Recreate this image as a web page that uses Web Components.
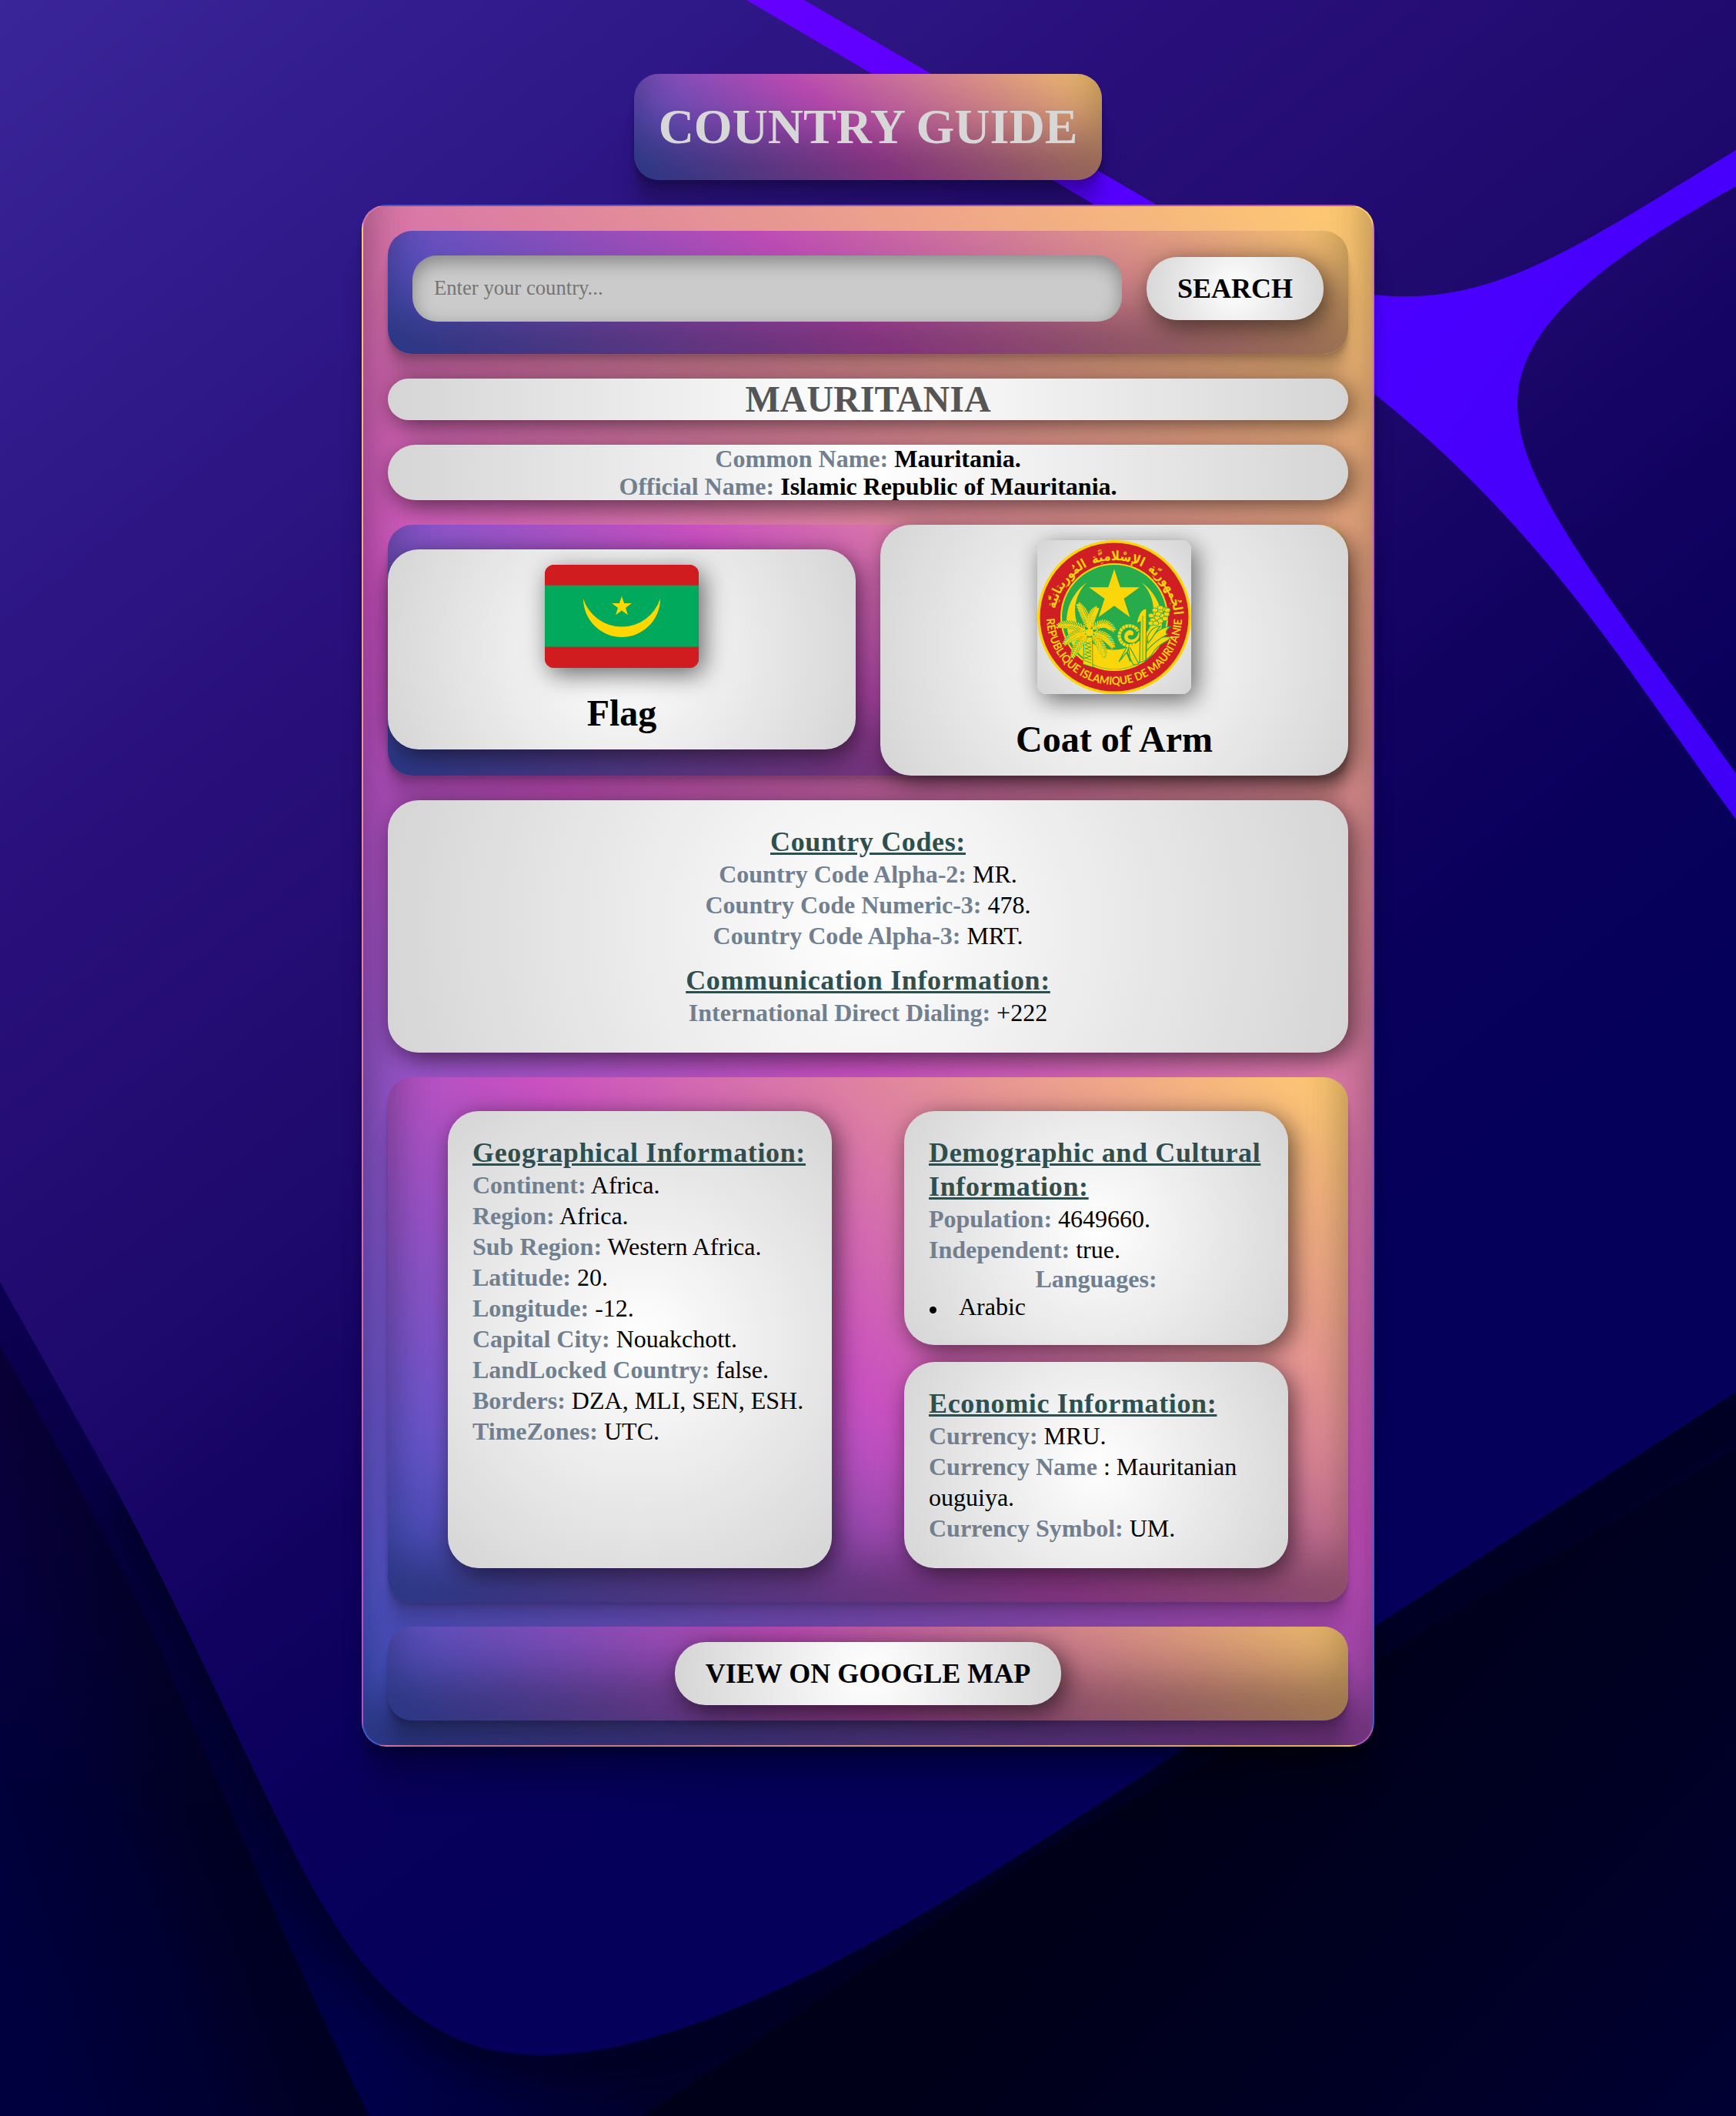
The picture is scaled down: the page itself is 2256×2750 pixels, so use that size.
<!DOCTYPE html>
<html lang="en">
<head>
<meta charset="utf-8">
<title>Country Guide</title>
<style>
  html, body { margin: 0; padding: 0; }
  body {
    font-family: "Liberation Serif", "Times New Roman", serif;
    font-size: 32px;
    color: #000;
    background: #00001c;
    --warm: linear-gradient(43deg, #4158d0 0%, #c850c0 46%, #ffcc70 100%);
    --clay: rgba(0,0,0,.17) 0 -46px 50px 0 inset, rgba(0,0,0,.15) 0 -72px 60px 0 inset,
            rgba(0,0,0,.1) 0 -158px 80px 0 inset, rgba(0,0,0,.06) 0 4px 2px, rgba(0,0,0,.09) 0 8px 4px,
            rgba(0,0,0,.09) 0 16px 8px, rgba(0,0,0,.09) 0 32px 16px, rgba(0,0,0,.09) 0 64px 32px;
    --pearl: radial-gradient(circle, #ffffff 0%, #d5d5d5 100%);
    --lift: 6px 8px 32px rgba(0,0,0,.6);
  }
</style>
</head>
<body>
<guide-page>
  <wave-backdrop slot="backdrop"></wave-backdrop>
  <page-title slot="title">COUNTRY GUIDE</page-title>
  <search-bar placeholder="Enter your country..." action="SEARCH"></search-bar>
  <country-banner>MAURITANIA</country-banner>
  <pearl-card variant="names">
    <info-row label="Common Name:">Mauritania.</info-row>
    <info-row label="Official Name:">Islamic Republic of Mauritania.</info-row>
  </pearl-card>
  <emblem-row>
    <picture-card caption="Flag"><mauritania-flag></mauritania-flag></picture-card>
    <picture-card caption="Coat of Arm"><mauritania-seal></mauritania-seal></picture-card>
  </emblem-row>
  <pearl-card variant="centered">
    <info-group heading="Country Codes:">
      <info-row label="Country Code Alpha-2:">MR.</info-row>
      <info-row label="Country Code Numeric-3:">478.</info-row>
      <info-row label="Country Code Alpha-3:">MRT.</info-row>
    </info-group>
    <info-group heading="Communication Information:">
      <info-row label="International Direct Dialing:">+222</info-row>
    </info-group>
  </pearl-card>
  <details-panel>
    <pearl-card slot="left" variant="tall">
      <info-group heading="Geographical Information:">
        <info-row label="Continent:">Africa.</info-row>
        <info-row label="Region:">Africa.</info-row>
        <info-row label="Sub Region:">Western Africa.</info-row>
        <info-row label="Latitude:">20.</info-row>
        <info-row label="Longitude:">-12.</info-row>
        <info-row label="Capital City:">Nouakchott.</info-row>
        <info-row label="LandLocked Country:">false.</info-row>
        <info-row label="Borders:">DZA, MLI, SEN, ESH.</info-row>
        <info-row label="TimeZones:">UTC.</info-row>
      </info-group>
    </pearl-card>
    <pearl-card slot="right">
      <info-group heading="Demographic and Cultural Information:">
        <info-row label="Population:">4649660.</info-row>
        <info-row label="Independent:">true.</info-row>
        <language-list heading="Languages:">Arabic</language-list>
      </info-group>
    </pearl-card>
    <pearl-card slot="right">
      <info-group heading="Economic Information:">
        <info-row label="Currency:">MRU.</info-row>
        <info-row label="Currency Name">: Mauritanian ouguiya.</info-row>
        <info-row label="Currency Symbol:">UM.</info-row>
      </info-group>
    </pearl-card>
  </details-panel>
  <map-bar><pill-button>VIEW ON GOOGLE MAP</pill-button></map-bar>
</guide-page>

<script>
const define = (name, render) => customElements.define(name, class extends HTMLElement {
  constructor() { super(); this.attachShadow({ mode: 'open' }); }
  connectedCallback() { this.shadowRoot.innerHTML = render(this); }
});

define('guide-page', () => `
  <style>
    :host { display: grid; width: 2256px; height: 2750px; overflow: hidden; }
    .page, ::slotted([slot=backdrop]) { grid-area: 1 / 1; }
    .page { position: relative; display: flex; flex-direction: column; align-items: center; gap: 32px; padding-top: 96px; }
    main { box-sizing: border-box; width: 1316px; padding: 32px; display: flex; flex-direction: column; gap: 32px;
           border: 2px solid transparent; border-radius: 32px; background: var(--warm); box-shadow: var(--clay); }
  </style>
  <slot name="backdrop"></slot>
  <div class="page">
    <slot name="title"></slot>
    <main><slot></slot></main>
  </div>`);

define('wave-backdrop', () => `
  <style>:host { display: block; } svg { display: block; }</style>
  <svg width="2256" height="2750" viewBox="0 0 2256 2750">
    <defs>
      <linearGradient id="sheet" gradientUnits="userSpaceOnUse" x1="0" y1="0" x2="1480" y2="1900">
        <stop offset="0" stop-color="#3a2599"/><stop offset=".2" stop-color="#301a8a"/><stop offset=".4" stop-color="#280f7a"/>
        <stop offset=".6" stop-color="#1f0a6d"/><stop offset=".76" stop-color="#120260"/><stop offset=".9" stop-color="#08005b"/><stop offset="1" stop-color="#05005a"/>
      </linearGradient>
      <linearGradient id="beam" gradientUnits="userSpaceOnUse" x1="1000" y1="0" x2="2256" y2="900">
        <stop offset="0" stop-color="#6400ff"/><stop offset=".55" stop-color="#4c00ff"/><stop offset="1" stop-color="#4000f8"/>
      </linearGradient>
      <linearGradient id="fold" gradientUnits="userSpaceOnUse" x1="0" y1="1700" x2="460" y2="2700">
        <stop offset="0" stop-color="#0c0050"/><stop offset=".4" stop-color="#04003c"/><stop offset=".65" stop-color="#000036"/><stop offset="1" stop-color="#00004a"/>
      </linearGradient>
      <linearGradient id="left" gradientUnits="userSpaceOnUse" x1="0" y1="2500" x2="330" y2="2400">
        <stop offset="0" stop-color="#00003e"/><stop offset="1" stop-color="#000026"/>
      </linearGradient>
      <linearGradient id="leftglow" gradientUnits="userSpaceOnUse" x1="0" y1="1750" x2="0" y2="2350">
        <stop offset="0" stop-color="#0e0046"/><stop offset="1" stop-color="#0e0046" stop-opacity="0"/>
      </linearGradient>
      <linearGradient id="leftshade" gradientUnits="userSpaceOnUse" x1="40" y1="2130" x2="200" y2="2060">
        <stop offset="0" stop-color="#00001e" stop-opacity="0"/><stop offset="1" stop-color="#00001e" stop-opacity=".6"/>
      </linearGradient>
      <linearGradient id="right" gradientUnits="userSpaceOnUse" x1="1500" y1="2300" x2="2150" y2="2900">
        <stop offset="0" stop-color="#000018"/><stop offset=".5" stop-color="#000024"/><stop offset="1" stop-color="#000034"/>
      </linearGradient>
      <radialGradient id="glow" gradientUnits="userSpaceOnUse" cx="440" cy="2700" r="420">
        <stop offset="0" stop-color="#00004c"/><stop offset=".3" stop-color="#000044"/><stop offset="1" stop-color="#00002a"/>
      </radialGradient>
      <filter id="soft" x="-20%" y="-20%" width="140%" height="140%"><feGaussianBlur stdDeviation="20"/></filter>
      <path id="bowl" d="M0 1666 L144 1923 C240 2100 330 2310 400 2442 C480 2590 570 2671 701 2671 C860 2671 1060 2570 1237 2465 C1380 2380 1660 2190 1798 2106 L2256 1809 V0 H0 Z"/>
    </defs>
    <rect width="2256" height="2750" fill="url(#glow)"/>
    <path d="M0 1600 L380 2250 L440 2500 L374 2524 L201 2128 L0 1760Z" fill="url(#fold)"/>
    <path d="M160 1950 C250 2120 340 2320 410 2450 C500 2600 570 2680 720 2685 C900 2685 1060 2590 1260 2475 L1820 2115 L2256 1835" fill="none" stroke="#00001e" stroke-width="40" filter="url(#soft)" opacity=".75"/>
    <path d="M0 1750 C70 1870 130 1980 201 2128 L374 2524 L479 2750 H0Z" fill="url(#left)"/>
    <path d="M0 1750 C70 1870 130 1980 201 2128 L374 2524 L479 2750 H0Z" fill="url(#leftglow)"/>
    <path d="M0 1750 C70 1870 130 1980 201 2128 L374 2524 L479 2750 H0Z" fill="url(#leftshade)"/>
    <path d="M835 2750 L1295 2443 C1400 2375 1480 2335 1583 2282 L1791 2154 L2256 1884 V2750Z" fill="url(#right)"/>
    <use href="#bowl" fill="url(#sheet)"/>
    <path fill="url(#beam)" d="M970 0 H1045 L1503 266 C1620 330 1700 372 1786 383 C1940 400 2050 320 2256 195 V242 C2090 335 1972 420 1972 525 C1972 630 2080 760 2256 1005 V1065 C2120 880 2010 690 1786 512 C1700 440 1560 350 1422 266 Z"/>
  </svg>`);

define('page-title', () => `
  <style>
    :host { display: block; padding: 32px; height: 74px; line-height: 74px; border-radius: 32px;
            font-size: 64px; font-weight: bold; color: #d7d7d7; background: var(--warm); box-shadow: var(--clay); }
  </style><slot></slot>`);

define('pill-button', () => `
  <style>
    :host { display: inline-block; border-radius: 40px; background: var(--pearl); box-shadow: var(--lift); }
    button { all: unset; display: block; padding: 20px 40px; font: bold 36px/42px "Liberation Serif", serif; color: #000; }
  </style><button type="button"><slot></slot></button>`);

define('search-bar', el => `
  <style>
    :host { display: flex; align-items: center; gap: 32px; padding: 32px 32px 42px; border-radius: 32px;
            background: var(--warm); box-shadow: var(--clay); }
    input { flex: 1; min-width: 0; box-sizing: border-box; height: 86px; border: 0; outline: 0; padding: 0 28px 2px; border-radius: 32px;
            font: 26.66px "Liberation Serif", serif; background: #cbcbcb; box-shadow: inset 0 8px 24px rgba(0,0,0,.35); }
    input::placeholder { color: #757575; }
  </style>
  <input type="text" placeholder="${el.getAttribute('placeholder')}"><pill-button>${el.getAttribute('action')}</pill-button>`);

define('country-banner', () => `
  <style>
    :host { display: block; height: 54px; line-height: 53px; border-radius: 40px; text-align: center; font-size: 48px;
            font-weight: bold; color: #555; background: var(--pearl); box-shadow: var(--lift); }
  </style><slot></slot>`);

define('pearl-card', () => `
  <style>
    :host { display: flex; flex-direction: column; gap: 16px; padding: 32px; border-radius: 40px; line-height: 40px;
            background: var(--pearl); box-shadow: var(--lift); }
    :host([variant=names]) { padding: 0; gap: 0; line-height: 36px; text-align: center; font-weight: bold; }
    :host([variant=centered]) { text-align: center; }
    :host([variant=tall]) { flex: 1; white-space: nowrap; }
  </style><slot></slot>`);

define('info-row', el => `
  <style>:host { display: block; } b { color: #708090; }</style><b>${el.getAttribute('label')}</b> <slot></slot>`);

define('info-group', el => `
  <style>
    :host { display: block; }
    h2 { margin: 0; font-size: 36px; line-height: 44px; letter-spacing: .64px; color: #2f4f4f; text-decoration: underline; }
  </style><h2>${el.getAttribute('heading')}</h2><slot></slot>`);

define('language-list', el => `
  <style>
    :host { display: block; line-height: 36px; }
    h3 { margin: 0; font-size: 32px; text-align: center; color: #708090; }
    .item { display: flex; align-items: center; gap: 29px; }
    .item::before { content: ""; width: 9px; height: 9px; margin: 9px 0 0 1px; border-radius: 50%; background: #000; }
  </style><h3>${el.getAttribute('heading')}</h3><div class="item"><span><slot></slot></span></div>`);

define('emblem-row', () => `
  <style>
    :host { display: flex; align-items: flex-start; gap: 32px; border-radius: 32px; background: var(--warm); box-shadow: var(--clay); }
    ::slotted(*) { flex: 1; }
    ::slotted(:first-child) { margin-top: 32px; }
  </style><slot></slot>`);

define('picture-card', el => `
  <style>
    :host { display: flex; flex-direction: column; align-items: center; gap: 32px; padding: 20px; border-radius: 40px;
            background: var(--pearl); box-shadow: var(--lift); }
    h2 { margin: 0; font-size: 48px; line-height: 54px; }
  </style><slot></slot><h2>${el.getAttribute('caption')}</h2>`);

const star = (cx, cy, R, r) => Array.from({ length: 10 }, (_, i) => {
  const a = -Math.PI / 2 + i * Math.PI / 5, q = i % 2 ? r : R;
  return (cx + q * Math.cos(a)).toFixed(2) + ',' + (cy + q * Math.sin(a)).toFixed(2);
}).join(' ');

define('mauritania-flag', () => `
  <style>
    :host { display: block; height: 133.5px; border-radius: 12px; overflow: hidden; background: #d01c1f; box-shadow: var(--lift); }
    svg { display: block; }
  </style>
  <svg width="200" height="134" viewBox="0 0 200 134">
    <rect width="200" height="134" fill="#d01c1f"/><rect y="26.67" width="200" height="80" fill="#00a95c"/>
    <path d="M50 44 A50 50 0 1 0 150 44 A52.5 52.5 0 0 1 50 44Z" fill="#ffd700"/>
    <polygon points="${star(100, 54.3, 13.6, 5.2)}" fill="#ffd700"/>
  </svg>`);

/* A frond is a curved rib with short leaflets set on both sides of it. */
function frond(x0, y0, cx, cy, x1, y1) {
  let d = `M${x0} ${y0}Q${cx} ${cy} ${x1} ${y1}`;
  for (let i = 2; i <= 14; i++) {
    const t = i / 14, u = 1 - t;
    const x = u * u * x0 + 2 * u * t * cx + t * t * x1, y = u * u * y0 + 2 * u * t * cy + t * t * y1;
    const a = Math.atan2(2 * u * (cy - y0) + 2 * t * (y1 - cy), 2 * u * (cx - x0) + 2 * t * (x1 - cx));
    const l = 6 * Math.sin(Math.PI * (0.18 + 0.72 * t)) + 1;
    for (const s of [-0.8, 0.8]) d += `M${x.toFixed(1)} ${y.toFixed(1)}l${(l * Math.cos(a + s)).toFixed(1)} ${(l * Math.sin(a + s)).toFixed(1)}`;
  }
  return d;
}
const fronds = [
  [68,120,64,98,54,84], [68,120,68,100,77,89], [68,120,84,101,99,116], [68,120,90,121,98,138], [68,120,84,134,87,150],
  [68,120,54,130,46,151], [68,120,50,118,36,134], [68,120,46,106,28,111]
].map(f => frond(...f)).join('');
const grains = [[148,98],[154,95],[160,92],[166,90],[150,104],[156,101],[162,98],[168,96],[148,108],[154,108],[160,105],[166,102],[160,88],[169,91],[153,91],[157,96]]
  .map(([x, y]) => `<ellipse cx="${x}" cy="${y}" rx="3.9" ry="3"/>`).join('');

define('mauritania-seal', () => `
  <style>
    :host { display: block; height: 200px; border-radius: 12px; overflow: hidden; background: var(--pearl); box-shadow: var(--lift); }
    svg { display: block; }
    .fr { font: bold 14.6px "Lato", "Open Sans", sans-serif; }
    .ar { font: bold 17px "DejaVu Sans", sans-serif; }
  </style>
  <svg width="200" height="200" viewBox="0 0 200 200">
    <defs>
      <path id="low" d="M12 100 A88 88 0 0 0 188 100"/>
      <path id="top" d="M22 104 A78 78 0 1 1 178 104"/>
    </defs>
    <circle cx="100" cy="100" r="100" fill="#fbd60b"/><circle cx="100" cy="100" r="96.5" fill="#d01f24"/>
    <circle cx="100" cy="100" r="70" fill="#fbd60b"/><circle cx="100" cy="100" r="68" fill="#28ab4b"/>
    <path d="M64.7 54.7 A62 62 0 1 0 135.3 54.7 A51 51 0 1 1 64.7 54.7Z" fill="#fbd60b"/>
    <polygon points="${star(100, 72, 34.6, 13.2)}" fill="#fbd60b"/>
    <path d="M61 126 L59.5 161 L72 165 L71.5 126Z" fill="#fbd60b" stroke="#28ab4b"/>
    <path d="M62 132l8 4M62 136l8 4M62 140l8 4M62 144l8 4M61 148l9 4M61 152l9 4M61 156l9 4M70 132l-8 4M70 138l-8 4M70 144l-8 4M70 150l-9 4" stroke="#28ab4b" stroke-width=".9"/>
    <path d="${fronds}" fill="none" stroke="#28ab4b" stroke-width="2.8"/>
    <path d="${fronds}" fill="none" stroke="#fbd60b" stroke-width="1.4" stroke-linecap="round"/>
    <circle cx="68" cy="120" r="5" fill="#fbd60b"/>
    <g fill="#fbd60b" stroke="#28ab4b" stroke-width="1.2">
      <path d="M142 140 C154 128 160 124 174 126 C168 134 158 132 148 150 L141 156Z"/>
      <path d="M142 132 C152 122 158 114 173 112 C166 118 166 122 170 122 C158 128 150 134 142 144Z"/>
      <path d="M143 126 C147 116 152 112 160 112 C154 118 152 124 144 134Z"/>
      <path d="M106 158 L118 136 L121 158 L116 146Z M119 137 L132 161 L125 162 L117 146Z"/>
      <path d="M133 159 L134 106 L129 108 C131 98 134 89 142 89 L141 156Z"/>
      <path d="M137 98 V156" fill="none" stroke-width=".8"/>
      <g stroke-width=".8">${grains}</g>
    </g>
    <circle cx="119" cy="124" r="13.5" fill="#28ab4b"/>
    <path d="M127 135 A13 13 0 1 1 131 118" fill="none" stroke="#fbd60b" stroke-width="4.2" stroke-dasharray="3.6 .7"/>
    <path d="M132 118 C135 128 128 135 119 133 C111 131 111 120 119 117 C125 116 127 122 123 124 C118 121 115 127 121 129 C127 130 131 125 132 118Z" fill="#fbd60b"/>
    <g fill="#fbd60b">
      <text class="fr"><textPath href="#low" startOffset="2" textLength="271" lengthAdjust="spacingAndGlyphs">RÉPUBLIQUE ISLAMIQUE DE MAURITANIE</textPath></text>
      <text class="ar"><textPath href="#top" startOffset="15" textLength="71" lengthAdjust="spacingAndGlyphs">المُوريتانيّة</textPath></text>
      <text class="ar"><textPath href="#top" startOffset="94" textLength="66" lengthAdjust="spacingAndGlyphs">الإسْلاميَّة</textPath></text>
      <text class="ar"><textPath href="#top" startOffset="168" textLength="70" lengthAdjust="spacingAndGlyphs">الجُمهوريّة</textPath></text>
    </g>
  </svg>`);

define('details-panel', () => `
  <style>
    :host { display: flex; justify-content: space-between; padding: 44px 78px; border-radius: 32px; background: var(--warm); box-shadow: var(--clay); }
    .col { width: 499px; display: flex; flex-direction: column; gap: 22px; }
  </style><div class="col"><slot name="left"></slot></div><div class="col"><slot name="right"></slot></div>`);

define('map-bar', () => `
  <style>:host { display: flex; justify-content: center; padding: 20px; border-radius: 32px; background: var(--warm); box-shadow: var(--clay); }</style><slot></slot>`);
</script>
</body>
</html>
